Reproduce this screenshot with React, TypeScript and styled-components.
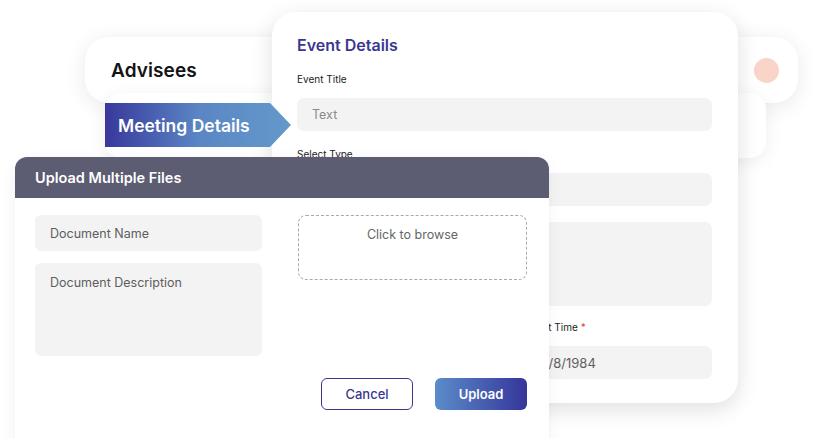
import React from "react";
import styled, { createGlobalStyle } from "styled-components";

const GlobalStyle = createGlobalStyle`
    html, body {
        margin: 0;
        padding: 0;
        background: #ffffff;
        overflow: hidden;
    }
    * {
        box-sizing: border-box;
    }
`;

const font = `"Inter", "Open Sans", "Noto Sans", sans-serif`;

const Canvas = styled.div`
    position: relative;
    width: 814px;
    height: 438px;
    overflow: hidden;
    background: #fff;
    font-family: ${font};
`;

// windows stacked on the illustration canvas
const AdviseesCard = styled.div`
    position: absolute;
    left: 85px;
    top: 37px;
    width: 713px;
    height: 66px;
    border-radius: 24px;
    background: #fff;
    box-shadow: 0 4px 22px rgba(0, 0, 0, 0.09);
    display: flex;
    align-items: center;
    justify-content: space-between;
    padding: 0 19px 0 26px;
`;

const AdviseesTitle = styled.h2`
    margin: 0;
    font-size: 19px;
    font-weight: 600;
    color: #141414;
    letter-spacing: 0.1px;
`;

const Avatar = styled.span`
    width: 25px;
    height: 25px;
    border-radius: 50%;
    background: #fbd4c9;
`;

const BackCard = styled.div`
    position: absolute;
    left: 105px;
    top: 93px;
    width: 661px;
    height: 65px;
    border-radius: 16px;
    background: #fff;
    box-shadow: 0 4px 18px rgba(0, 0, 0, 0.07);
`;

const Tab = styled.div`
    position: absolute;
    left: 105px;
    top: 103px;
    width: 186px;
    height: 44px;
    z-index: 3;
    display: flex;
    align-items: center;
    padding-left: 13px;
    background: linear-gradient(90deg, #38389b 0%, #5a86c4 50%, #6499cb 100%);
    clip-path: polygon(0 0, calc(100% - 21px) 0, 100% 50%, calc(100% - 21px) 100%, 0 100%);
    color: #fff;
    font-size: 17.5px;
    font-weight: 600;
`;

const EventCard = styled.div`
    position: absolute;
    left: 272px;
    top: 12px;
    width: 466px;
    height: 391px;
    z-index: 2;
    border-radius: 24px;
    background: #fff;
    box-shadow: 0 6px 22px rgba(0, 0, 0, 0.13);
    padding: 24px 26px 0 25px;
    display: flex;
    flex-direction: column;
`;

const EventTitle = styled.h3`
    margin: 0 0 18px;
    font-size: 16px;
    font-weight: 600;
    color: #3b3791;
    line-height: 18px;
`;

const Label = styled.div`
    font-size: 10px;
    color: #1c1c1c;
    line-height: 14px;
    margin-bottom: 12px;
    white-space: nowrap;
`;

const Required = styled.span`
    color: #e0453f;
`;

const Field = styled.div<{ $h?: number; $mb?: number; $pad?: number }>`
    height: ${(p) => p.$h ?? 33}px;
    margin-bottom: ${(p) => p.$mb ?? 15}px;
    border-radius: 7px;
    background: #f3f3f3;
    padding: 0 ${(p) => p.$pad ?? 15}px;
    display: flex;
    align-items: center;
    font-size: 12.5px;
    color: #8a8a8a;
`;

const Value = styled.span`
    font-size: 13px;
    color: #5f5f5f;
`;

const TwoCol = styled.div`
    display: grid;
    grid-template-columns: 1fr 183px;
    gap: 15px;
`;

const Modal = styled.div`
    position: absolute;
    left: 15px;
    top: 157px;
    width: 534px;
    height: 300px;
    z-index: 5;
    border-radius: 12px 12px 0 0;
    background: #fff;
    box-shadow: 0 4px 16px rgba(0, 0, 0, 0.06);
    overflow: hidden;
`;

const ModalHeader = styled.div`
    height: 41px;
    background: #5c5c72;
    display: flex;
    align-items: center;
    padding-left: 20px;
    color: #fff;
    font-size: 14.5px;
    font-weight: 600;
`;

const ModalBody = styled.div`
    padding: 17px 22px 0 20px;
    display: grid;
    grid-template-columns: 227px 229px;
    column-gap: 36px;
`;

const Column = styled.div`
    display: flex;
    flex-direction: column;
    gap: 12px;
`;

const Input = styled.div<{ $h: number; $top?: boolean }>`
    height: ${(p) => p.$h}px;
    border-radius: 6px;
    background: #f3f3f3;
    padding: ${(p) => (p.$top ? "12px 15px 0" : "0 15px")};
    display: flex;
    align-items: ${(p) => (p.$top ? "flex-start" : "center")};
    font-size: 12.5px;
    color: #5e5e5e;
`;

const DropZone = styled.div`
    height: 65px;
    border: 1px dashed #a9a9a9;
    border-radius: 8px;
    display: flex;
    justify-content: center;
    padding-top: 11px;
    font-size: 12.5px;
    color: #666;
`;

const Actions = styled.div`
    grid-column: 1 / -1;
    display: flex;
    justify-content: flex-end;
    gap: 22px;
    margin-top: 22px;
`;

const Button = styled.button<{ $primary?: boolean }>`
    width: 92px;
    height: 32px;
    border-radius: 6px;
    font-family: ${font};
    font-size: 13px;
    font-weight: ${(p) => (p.$primary ? 600 : 500)};
    cursor: pointer;
    border: ${(p) => (p.$primary ? "none" : "1px solid #3b3791")};
    color: ${(p) => (p.$primary ? "#fff" : "#3b3791")};
    background: ${(p) => (p.$primary ? "linear-gradient(90deg, #5b8cc9 0%, #35359a 100%)" : "#fff")};
`;

export default function App() {
    return (
        <Canvas>
            <GlobalStyle />
            <AdviseesCard>
                <AdviseesTitle>Advisees</AdviseesTitle>
                <Avatar />
            </AdviseesCard>
            <BackCard />
            <Tab>Meeting Details</Tab>
            <EventCard>
                <EventTitle>Event Details</EventTitle>
                <Label>Event Title</Label>
                <Field $mb={16}>Text</Field>
                <Label>Select Type</Label>
                <Field $mb={16} />
                <Field $h={84} $mb={14} />
                <TwoCol>
                    <div>
                        <Label>Date <Required>*</Required></Label>
                        <Field><Value>11/8/1984</Value></Field>
                    </div>
                    <div>
                        <Label>Start Time <Required>*</Required></Label>
                        <Field $pad={9}><Value>11/8/1984</Value></Field>
                    </div>
                </TwoCol>
            </EventCard>
            <Modal>
                <ModalHeader>Upload Multiple Files</ModalHeader>
                <ModalBody>
                    <Column>
                        <Input $h={36}>Document Name</Input>
                        <Input $h={93} $top>Document Description</Input>
                    </Column>
                    <Column>
                        <DropZone>Click to browse</DropZone>
                    </Column>
                    <Actions>
                        <Button>Cancel</Button>
                        <Button $primary>Upload</Button>
                    </Actions>
                </ModalBody>
            </Modal>
        </Canvas>
    );
}
